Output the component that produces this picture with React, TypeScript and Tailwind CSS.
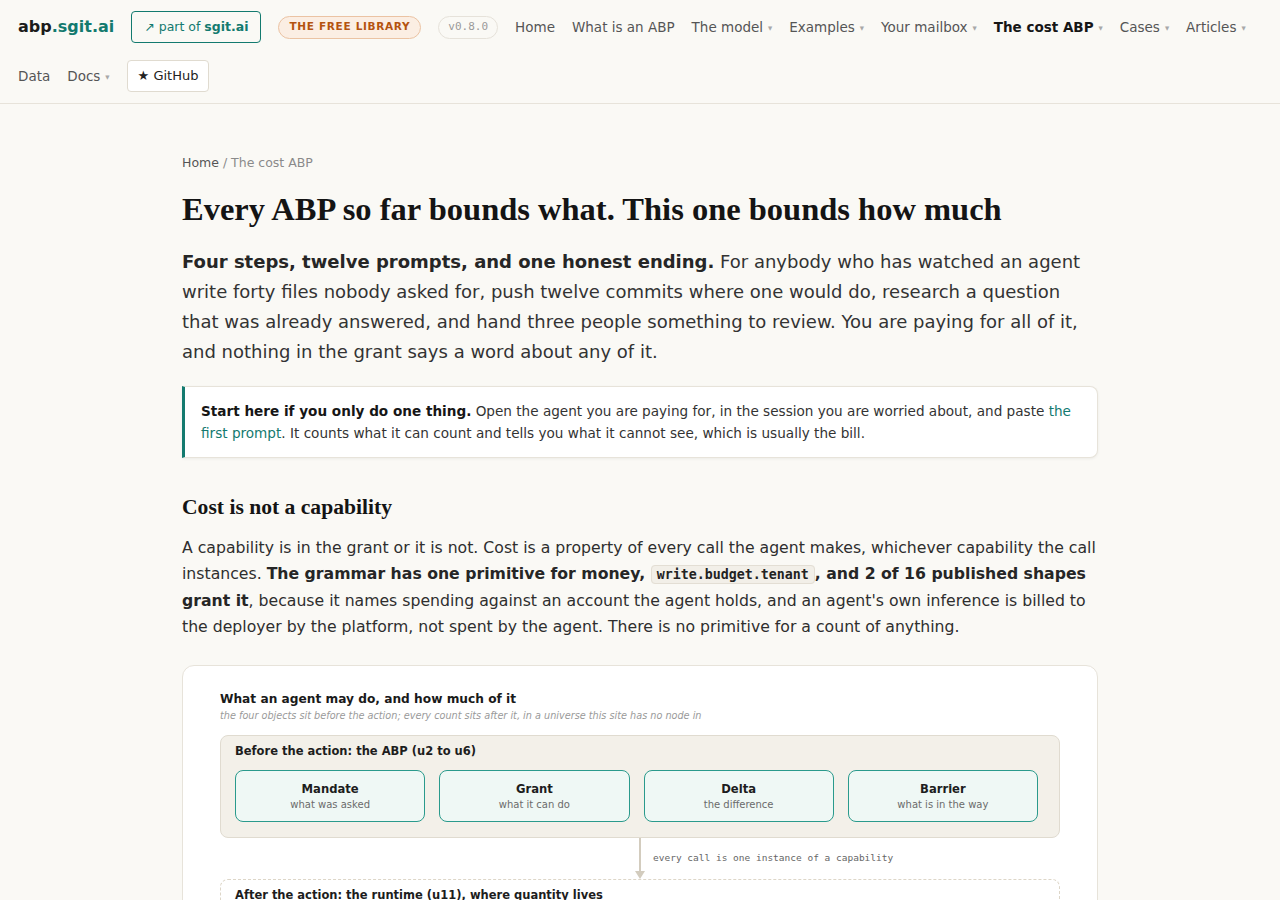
import React from "react";

const sans = { fontFamily: '"DejaVu Sans", Verdana, sans-serif' };
const mono = { fontFamily: '"DejaVu Sans Mono", monospace' };
const serif = { fontFamily: '"Liberation Serif", "Times New Roman", serif' };

interface NavItem {
  label: string;
  caret?: boolean;
  active?: boolean;
}

const navItems: NavItem[] = [
  { label: "Home" },
  { label: "What is an ABP" },
  { label: "The model", caret: true },
  { label: "Examples", caret: true },
  { label: "Your mailbox", caret: true },
  { label: "The cost ABP", caret: true, active: true },
  { label: "Cases", caret: true },
  { label: "Articles", caret: true },
  { label: "Data" },
  { label: "Docs", caret: true },
];

const objects = [
  { name: "Mandate", sub: "what was asked" },
  { name: "Grant", sub: "what it can do" },
  { name: "Delta", sub: "the difference" },
  { name: "Barrier", sub: "what is in the way" },
];

const counts = [
  { name: "Tokens", sub: "billed to the deployer" },
  { name: "Calls", sub: "one per action" },
  { name: "Commits", sub: "pushed, not planned" },
  { name: "Reviewers", sub: "people handed work" },
];

const Header: React.FC = () => (
  <header className="flex flex-wrap items-center gap-[17px] px-[18px] py-[11px] border-b border-[#e7e3da]">
    <a className="text-[16px] font-bold text-[#1c1c1c] leading-none">
      abp<span className="text-[#137a6f]">.sgit.ai</span>
    </a>
    <a className="h-[32px] flex items-center px-[12px] border border-[#137a6f] rounded-[4px] text-[12.5px] text-[#137a6f] whitespace-pre">
      ↗ part of <span className="font-bold">sgit.ai</span>
    </a>
    <span className="h-[23px] flex items-center px-[10px] rounded-full border border-[#ebc3a3] bg-[#fbeee3] text-[10.5px] font-bold tracking-[0.065em] text-[#b4530f]">
      THE FREE LIBRARY
    </span>
    <span
      className="h-[23px] flex items-center px-[9px] rounded-full border border-[#e6e2da] text-[11px] text-[#9a9a9a]"
      style={mono}
    >
      v0.8.0
    </span>
    {navItems.map((item) => (
      <a
        key={item.label}
        className={`h-[32px] flex items-center text-[13.5px] ${
          item.active ? "font-bold text-[#161616]" : "text-[#555555]"
        }`}
      >
        {item.label}
        {item.caret && <span className="ml-[5px] mt-[2px] text-[5.5px] text-[#a8a8a8]">▼</span>}
      </a>
    ))}
    <a className="h-[32px] flex items-center px-[10px] border border-[#e0dbd0] bg-white rounded-[4px] text-[13px] text-[#222]">
      ★ GitHub
    </a>
  </header>
);

const ObjectCard: React.FC<{ name: string; sub: string }> = ({ name, sub }) => (
  <div className="h-[52px] flex flex-col items-center justify-center rounded-[8px] border-[1.5px] border-[#2a9a8c] bg-[#eff8f5]">
    <div className="text-[11.6px] font-bold text-[#1d1d1d] leading-[16px]">{name}</div>
    <div className="text-[10px] text-[#6b6b6b] leading-[15px]">{sub}</div>
  </div>
);

const Diagram: React.FC = () => (
  <figure className="mt-[25px] bg-white border border-[#e7e3da] rounded-[12px] px-[37px] pt-[25px] pb-[30px]">
    <div className="text-[12.2px] font-bold text-[#1a1a1a] leading-[17px]">
      What an agent may do, and how much of it
    </div>
    <div className="mt-[1px] text-[9.7px] italic text-[#9a9a9a] leading-[14px]">
      the four objects sit before the action; every count sits after it, in a universe this site has no node in
    </div>
    <div className="mt-[12px] bg-[#f3f0e9] border border-[#e0dbd0] rounded-[8px] pl-[14px] pr-[21px] pt-[7px] pb-[15px]">
      <div className="text-[11.5px] font-bold text-[#1d1d1d] leading-[16px]">
        Before the action: the ABP (u2 to u6)
      </div>
      <div className="mt-[11px] grid grid-cols-4 gap-[14px]">
        {objects.map((o) => (
          <ObjectCard key={o.name} {...o} />
        ))}
      </div>
    </div>
    <div className="grid grid-cols-[1fr_auto_1fr] h-[41px]">
      <div />
      <div className="flex flex-col items-center">
        <div className="w-[1.5px] flex-1 bg-[#d3ccbe]" />
        <svg width="10" height="8" viewBox="0 0 10 8" className="block">
          <path d="M0 0 L10 0 L5 8 Z" fill="#d3ccbe" />
        </svg>
      </div>
      <div className="flex items-center pl-[8px]">
        <span className="text-[9.5px] text-[#666] whitespace-nowrap" style={mono}>
          every call is one instance of a capability
        </span>
      </div>
    </div>
    <div className="border border-dashed border-[#ddd6c8] rounded-[8px] pl-[14px] pr-[21px] pt-[7px] pb-[15px]">
      <div className="text-[11.5px] font-bold text-[#1d1d1d] leading-[16px]">
        After the action: the runtime (u11), where quantity lives
      </div>
      <div className="mt-[11px] grid grid-cols-4 gap-[14px]">
        {counts.map((o) => (
          <div
            key={o.name}
            className="h-[52px] flex flex-col items-center justify-center rounded-[8px] border border-dashed border-[#cfc7b7] bg-[#faf8f3]"
          >
            <div className="text-[11.6px] font-bold text-[#444] leading-[16px]">{o.name}</div>
            <div className="text-[10px] text-[#888] leading-[15px]">{o.sub}</div>
          </div>
        ))}
      </div>
    </div>
  </figure>
);

const App: React.FC = () => {
  return (
    <div className="min-h-screen bg-[#faf9f5] text-[#2b2b2b]" style={sans}>
      <Header />
      <main className="max-w-[916px] mx-auto pt-[49px] pb-[80px]">
        <nav className="text-[12.5px] leading-[20px] text-[#8a8a8a]">
          <a className="text-[#555]">Home</a> / The cost ABP
        </nav>
        <h1 className="mt-[17px] text-[32.5px] font-bold leading-[38px] text-[#141414]" style={serif}>
          Every ABP so far bounds what. This one bounds how much
        </h1>
        <p className="mt-[19px] text-[18px] leading-[30px] text-[#333]">
          <strong className="font-bold text-[#262626]">
            Four steps, twelve prompts, and one honest ending.
          </strong>{" "}
          For anybody who has watched an agent write forty files nobody asked for, push twelve commits where one
          would do, research a question that was already answered, and hand three people something to review. You
          are paying for all of it, and nothing in the grant says a word about any of it.
        </p>
        <div className="mt-[19px] bg-white border border-[#e7e3da] border-l-[3px] border-l-[#137a6f] rounded-r-[8px] shadow-[0_1px_3px_rgba(0,0,0,0.06)] pl-[16px] pr-[20px] pt-[13px] pb-[13px] text-[13.6px] leading-[22px] text-[#333]">
          <strong className="font-bold text-[#161616]">Start here if you only do one thing.</strong> Open the agent
          you are paying for, in the session you are worried about, and paste{" "}
          <a className="text-[#137a6f]">the first prompt</a>. It counts what it can count and tells you what it
          cannot see, which is usually the bill.
        </div>
        <h2 className="mt-[35px] text-[21.6px] font-bold leading-[28px] text-[#141414]" style={serif}>
          Cost is not a capability
        </h2>
        <p className="mt-[14px] text-[15.7px] leading-[26px] text-[#2e2e2e]">
          A capability is in the grant or it is not. Cost is a property of every call the agent makes, whichever
          capability the call instances.{" "}
          <strong className="font-bold text-[#262626]">
            The grammar has one primitive for money,{" "}
            <code
              className="text-[13.3px] font-semibold px-[5px] py-[1px] bg-[#f2efe8] border border-[#e3ded4] rounded-[4px] text-[#222]"
              style={mono}
            >
              write.budget.tenant
            </code>
            , and 2 of 16 published shapes grant it
          </strong>
          , because it names spending against an account the agent holds, and an agent's own inference is billed
          to the deployer by the platform, not spent by the agent. There is no primitive for a count of anything.
        </p>
        <Diagram />
      </main>
    </div>
  );
};

export default App;
